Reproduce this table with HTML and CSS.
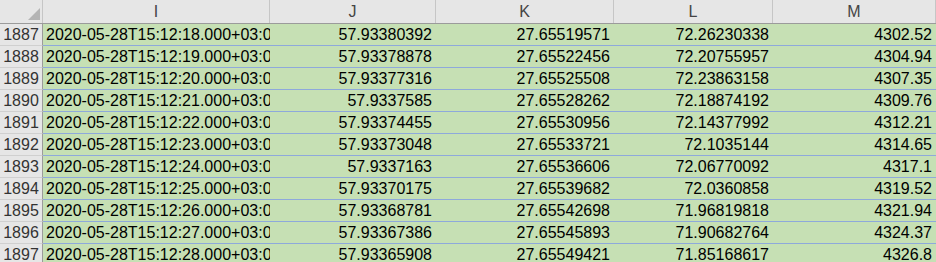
FILE: index.html
```html
<!DOCTYPE html>
<html>
<head>
<meta charset="utf-8">
<link rel="stylesheet" href="styles.css">
</head>
<body>
<div class="sheet">
  <div class="row head">
    <div class="corner"><span class="tri"></span></div>
    <div class="colh">I</div>
    <div class="colh">J</div>
    <div class="colh">K</div>
    <div class="colh">L</div>
    <div class="colh">M</div>
  </div>
  <div class="row"><div class="rowh">1887</div><div class="cell txt">2020-05-28T15:12:18.000+03:00</div><div class="cell">57.93380392</div><div class="cell">27.65519571</div><div class="cell">72.26230338</div><div class="cell">4302.52</div></div>
  <div class="row"><div class="rowh">1888</div><div class="cell txt">2020-05-28T15:12:19.000+03:00</div><div class="cell">57.93378878</div><div class="cell">27.65522456</div><div class="cell">72.20755957</div><div class="cell">4304.94</div></div>
  <div class="row"><div class="rowh">1889</div><div class="cell txt">2020-05-28T15:12:20.000+03:00</div><div class="cell">57.93377316</div><div class="cell">27.65525508</div><div class="cell">72.23863158</div><div class="cell">4307.35</div></div>
  <div class="row"><div class="rowh">1890</div><div class="cell txt">2020-05-28T15:12:21.000+03:00</div><div class="cell">57.9337585</div><div class="cell">27.65528262</div><div class="cell">72.18874192</div><div class="cell">4309.76</div></div>
  <div class="row"><div class="rowh">1891</div><div class="cell txt">2020-05-28T15:12:22.000+03:00</div><div class="cell">57.93374455</div><div class="cell">27.65530956</div><div class="cell">72.14377992</div><div class="cell">4312.21</div></div>
  <div class="row"><div class="rowh">1892</div><div class="cell txt">2020-05-28T15:12:23.000+03:00</div><div class="cell">57.93373048</div><div class="cell">27.65533721</div><div class="cell">72.1035144</div><div class="cell">4314.65</div></div>
  <div class="row"><div class="rowh">1893</div><div class="cell txt">2020-05-28T15:12:24.000+03:00</div><div class="cell">57.9337163</div><div class="cell">27.65536606</div><div class="cell">72.06770092</div><div class="cell">4317.1</div></div>
  <div class="row"><div class="rowh">1894</div><div class="cell txt">2020-05-28T15:12:25.000+03:00</div><div class="cell">57.93370175</div><div class="cell">27.65539682</div><div class="cell">72.0360858</div><div class="cell">4319.52</div></div>
  <div class="row"><div class="rowh">1895</div><div class="cell txt">2020-05-28T15:12:26.000+03:00</div><div class="cell">57.93368781</div><div class="cell">27.65542698</div><div class="cell">71.96819818</div><div class="cell">4321.94</div></div>
  <div class="row"><div class="rowh">1896</div><div class="cell txt">2020-05-28T15:12:27.000+03:00</div><div class="cell">57.93367386</div><div class="cell">27.65545893</div><div class="cell">71.90682764</div><div class="cell">4324.37</div></div>
  <div class="row"><div class="rowh">1897</div><div class="cell txt">2020-05-28T15:12:28.000+03:00</div><div class="cell">57.93365908</div><div class="cell">27.65549421</div><div class="cell">71.85168617</div><div class="cell">4326.8</div></div>
</div>
</body>
</html>
```
FILE: styles.css
```css
html, body {
  margin: 0;
  padding: 0;
  background: #ffffff;
}
.sheet {
  width: 936px;
  height: 262px;
  overflow: hidden;
  font-family: "Liberation Sans", Arial, sans-serif;
  font-size: 16px;
  color: #000;
}
.row {
  display: grid;
  grid-template-columns: 43px 227px 166px 178px 159px 163px;
  height: 22px;
  box-sizing: border-box;
}
.row.head {
  height: 24px;
  background: #e6e6e6;
  border-bottom: 1px solid #9b9b9b;
}
.corner {
  position: relative;
  border-right: 1px solid #c6c6c6;
}
.tri {
  position: absolute;
  right: 2px;
  bottom: 3px;
  width: 0;
  height: 0;
  border-left: 12px solid transparent;
  border-bottom: 12px solid #b4b4b4;
}
.colh {
  border-right: 1px solid #c6c6c6;
  text-align: center;
  line-height: 23px;
  color: #444;
}
.rowh {
  background: #e6e6e6;
  border-right: 1px solid #9b9b9b;
  border-bottom: 1px solid #d0d0d0;
  text-align: center;
  padding-top: 1px;
  line-height: 20px;
  color: #333;
  box-sizing: border-box;
}
.cell {
  background: #c6e0b4;
  border-bottom: 1px solid #8ea9db;
  padding-top: 1px;
  line-height: 20px;
  text-align: right;
  padding-right: 4px;
  white-space: nowrap;
  overflow: hidden;
  box-sizing: border-box;
}
.cell.txt {
  text-align: left;
  padding-left: 3px;
  padding-right: 0;
}
```
